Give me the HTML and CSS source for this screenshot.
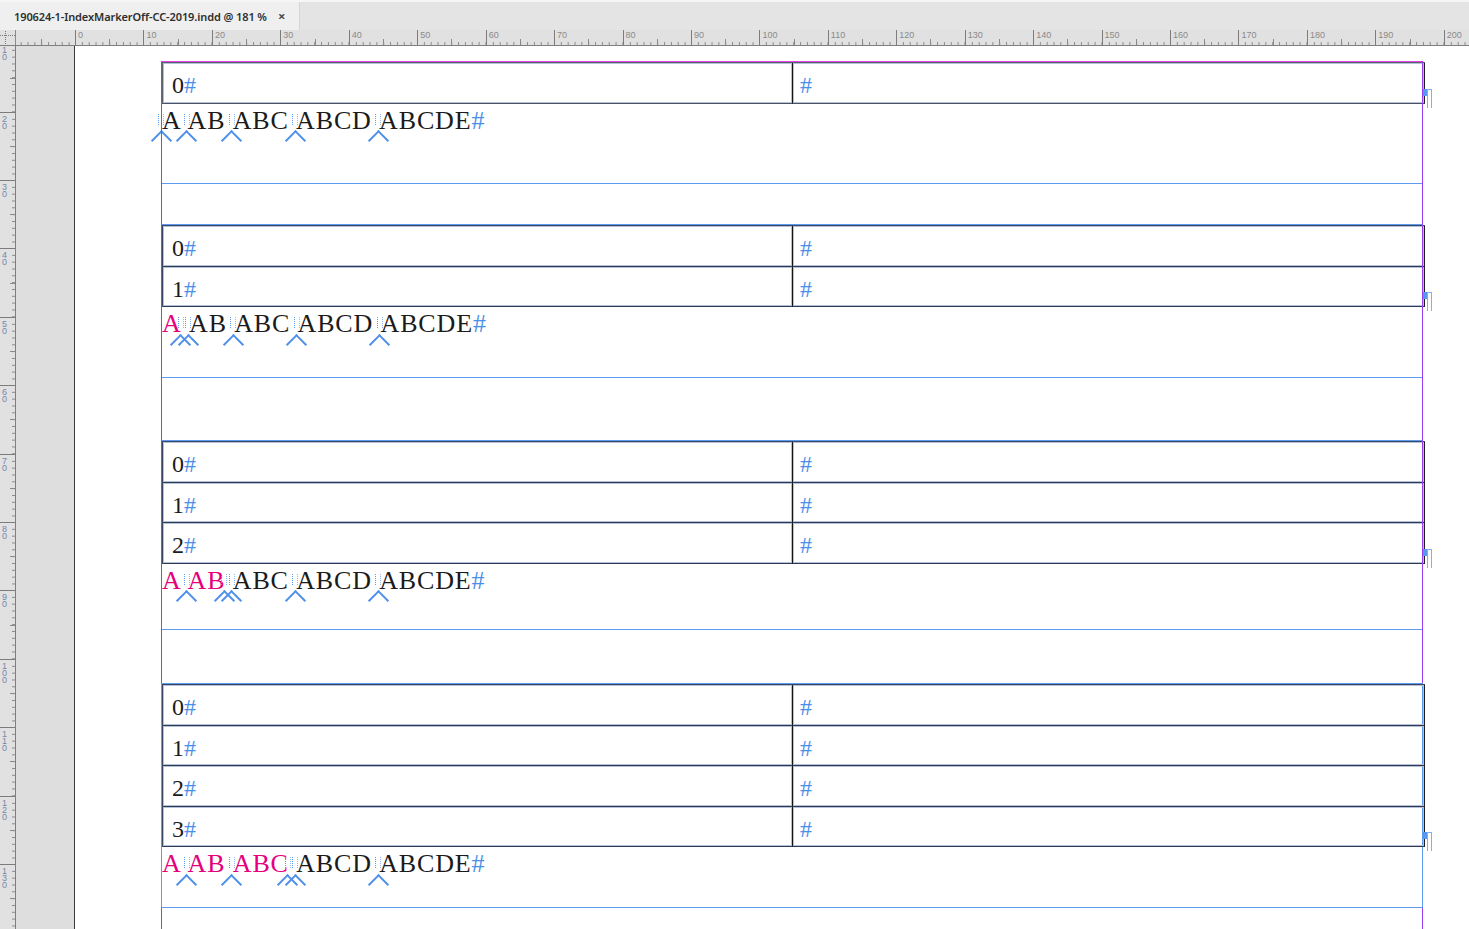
FILE: index.html
```html
<!DOCTYPE html>
<html lang="en">
<head>
<meta charset="utf-8">
<title>190624-1-IndexMarkerOff-CC-2019.indd</title>
<link rel="stylesheet" href="styles.css">
</head>
<body>
<div class="app">
  <div class="tabbar">
    <div class="tab">
      <span class="tab-title">190624-1-IndexMarkerOff-CC-2019.indd @ 181 %</span>
      <span class="tab-close">×</span>
    </div>
  </div>

  <div class="hruler-row">
    <div class="corner">
      <svg width="15" height="15" viewBox="0 0 15 15">
        <line x1="0" y1="5.5" x2="15" y2="5.5" stroke="#7a7a7a" stroke-width="1" stroke-dasharray="1 1"/>
        <line x1="5.5" y1="1" x2="5.5" y2="15" stroke="#7a7a7a" stroke-width="1" stroke-dasharray="1 1"/>
      </svg>
    </div>
    <div class="hruler">
      <div class="hstrip">
        <div class="hseg"></div>
        <div class="hseg">0</div>
        <div class="hseg">10</div>
        <div class="hseg">20</div>
        <div class="hseg">30</div>
        <div class="hseg">40</div>
        <div class="hseg">50</div>
        <div class="hseg">60</div>
        <div class="hseg">70</div>
        <div class="hseg">80</div>
        <div class="hseg">90</div>
        <div class="hseg">100</div>
        <div class="hseg">110</div>
        <div class="hseg">120</div>
        <div class="hseg">130</div>
        <div class="hseg">140</div>
        <div class="hseg">150</div>
        <div class="hseg">160</div>
        <div class="hseg">170</div>
        <div class="hseg">180</div>
        <div class="hseg">190</div>
        <div class="hseg">200</div>
      </div>
    </div>
  </div>

  <div class="workarea">
    <div class="vruler">
      <div class="vstrip">
        <div class="vseg"><span class="vlab">10</span></div>
        <div class="vseg"><span class="vlab">20</span></div>
        <div class="vseg"><span class="vlab">30</span></div>
        <div class="vseg"><span class="vlab">40</span></div>
        <div class="vseg"><span class="vlab">50</span></div>
        <div class="vseg"><span class="vlab">60</span></div>
        <div class="vseg"><span class="vlab">70</span></div>
        <div class="vseg"><span class="vlab">80</span></div>
        <div class="vseg"><span class="vlab">90</span></div>
        <div class="vseg"><span class="vlab">100</span></div>
        <div class="vseg"><span class="vlab">110</span></div>
        <div class="vseg"><span class="vlab">120</span></div>
        <div class="vseg"><span class="vlab">130</span></div>
        <div class="vseg"></div>
      </div>
    </div>
    <div class="pasteboard"></div>
    <div class="page">
      <div class="guides"></div>

      <div class="frame f1">
        <div class="tbl">
          <div class="cell c1"><span>0</span><span class="hash">#</span></div>
          <div class="cell c2"><span class="hash">#</span></div>
          <span class="tend"></span>
        </div>
        <p class="para"><span class="mk"></span>A <span class="mk"></span>AB <span class="mk"></span>ABC <span class="mk"></span>ABCD <span class="mk"></span>ABCDE<span class="hash">#</span></p>
      </div>

      <div class="frame f2">
        <div class="tbl">
          <div class="cell c1"><span>0</span><span class="hash">#</span></div>
          <div class="cell c2"><span class="hash">#</span></div>
          <div class="cell c1"><span>1</span><span class="hash">#</span></div>
          <div class="cell c2"><span class="hash">#</span></div>
          <span class="tend"></span>
        </div>
        <p class="para"><span class="pk">A</span><span class="mk"></span> <span class="mk"></span>AB <span class="mk"></span>ABC <span class="mk"></span>ABCD <span class="mk"></span>ABCDE<span class="hash">#</span></p>
      </div>

      <div class="frame f3">
        <div class="tbl">
          <div class="cell c1"><span>0</span><span class="hash">#</span></div>
          <div class="cell c2"><span class="hash">#</span></div>
          <div class="cell c1"><span>1</span><span class="hash">#</span></div>
          <div class="cell c2"><span class="hash">#</span></div>
          <div class="cell c1"><span>2</span><span class="hash">#</span></div>
          <div class="cell c2"><span class="hash">#</span></div>
          <span class="tend"></span>
        </div>
        <p class="para"><span class="pk">A</span> <span class="mk"></span><span class="pk">AB</span><span class="mk"></span> <span class="mk"></span>ABC <span class="mk"></span>ABCD <span class="mk"></span>ABCDE<span class="hash">#</span></p>
      </div>

      <div class="frame f4">
        <div class="tbl">
          <div class="cell c1"><span>0</span><span class="hash">#</span></div>
          <div class="cell c2"><span class="hash">#</span></div>
          <div class="cell c1"><span>1</span><span class="hash">#</span></div>
          <div class="cell c2"><span class="hash">#</span></div>
          <div class="cell c1"><span>2</span><span class="hash">#</span></div>
          <div class="cell c2"><span class="hash">#</span></div>
          <div class="cell c1"><span>3</span><span class="hash">#</span></div>
          <div class="cell c2"><span class="hash">#</span></div>
          <span class="tend"></span>
        </div>
        <p class="para"><span class="pk">A</span> <span class="mk"></span><span class="pk">AB</span> <span class="mk"></span><span class="pk">ABC</span><span class="mk"></span> <span class="mk"></span>ABCD <span class="mk"></span>ABCDE<span class="hash">#</span></p>
      </div>
    </div>
  </div>
</div>
</body>
</html>
```

FILE: styles.css
```css
* { box-sizing: border-box; }

html, body {
  margin: 0;
  padding: 0;
  overflow: hidden;
}

body {
  font-family: "Noto Sans", "Liberation Sans", sans-serif;
  background: #e3e3e3;
}

.app {
  display: flex;
  flex-direction: column;
  width: 1469px;
  height: 929px;
}

/* ---------- tab bar ---------- */
.tabbar {
  flex: none;
  height: 30px;
  display: flex;
  background: #e4e4e4;
  border-top: 2px solid #f5f5f5;
}

.tab {
  width: 300px;
  display: flex;
  align-items: center;
  padding-left: 14px;
  background: #efefef;
  border-right: 1px solid #d6d6d6;
}

.tab-title {
  font-size: 11px;
  font-weight: 600;
  color: #2e2e2e;
  letter-spacing: -0.1px;
  white-space: nowrap;
}

.tab-close {
  margin-left: 11px;
  font-size: 13px;
  font-weight: 700;
  color: #4a4a4a;
  line-height: 1;
}

/* ---------- horizontal ruler ---------- */
.hruler-row {
  flex: none;
  height: 16px;
  display: flex;
  background: #e1e1e1;
  border-bottom: 1px solid #7f7f7f;
}

.corner {
  flex: none;
  width: 16px;
  border-right: 1px solid #8a8a8a;
  display: flex;
  align-items: flex-start;
}

.hruler {
  flex: 1;
  overflow: hidden;
  position: relative;
}

.hstrip {
  display: flex;
  height: 100%;
  margin-left: -9.45px;
}

.hseg {
  flex: none;
  width: 68.45px;
  height: 100%;
  border-left: 1px solid #7c7c7c;
  padding: 1px 0 0 2px;
  font-family: "Liberation Sans", sans-serif;
  font-size: 9px;
  line-height: 9px;
  color: #8a8a8a;
  white-space: nowrap;
  background:
    linear-gradient(#8a8a8a, #8a8a8a) left 33.2px bottom 0 / 1px 6px no-repeat,
    linear-gradient(to right, #8a8a8a 1px, transparent 1px) left -1px bottom 0 / 6.845px 3px repeat-x;
}

/* ---------- work area ---------- */
.workarea {
  flex: 1;
  display: flex;
  min-height: 0;
  overflow: hidden;
}

.vruler {
  flex: none;
  width: 16px;
  background: #e1e1e1;
  border-right: 1px solid #7f7f7f;
  overflow: hidden;
}

.vstrip {
  margin-top: -2.7px;
}

.vseg {
  height: 68.4px;
  border-top: 1px solid #7c7c7c;
  padding: 3px 0 0 2px;
  background:
    linear-gradient(#8a8a8a, #8a8a8a) right 0 top 33.2px / 5px 1px no-repeat,
    linear-gradient(to bottom, #8a8a8a 1px, transparent 1px) right 0 top -1px / 3px 6.84px repeat-y;
}

.vlab {
  display: block;
  width: 6px;
  word-break: break-all;
  font-family: "Liberation Sans", sans-serif;
  font-size: 9px;
  line-height: 7px;
  color: #7586aa;
}

.pasteboard {
  flex: none;
  width: 58px;
  background: #dedede;
}

.page {
  flex: 1;
  position: relative;
  background: #ffffff;
  border-left: 1px solid #3b3b3b;
  padding: 15px 0 0 86px;
  overflow: hidden;
}

.guides {
  position: absolute;
  left: 86px;
  top: 15px;
  bottom: 0;
  width: 1262px;
  border-left: 1px solid #9a3ef4;
  border-right: 1px solid #9a3ef4;
  border-top: 1px solid #e83ce6;
  z-index: 1;
  pointer-events: none;
}

/* ---------- text frames ---------- */
.frame {
  position: relative;
  width: 1262px;
  border: 1px solid #5b9cf0;
}

.f1 { height: 123px; }
.f2 { height: 154px; margin-top: 40px; }
.f3 { height: 190px; margin-top: 62px; }
.f4 { height: 225px; margin-top: 53px; z-index: 2; }

/* ---------- tables ---------- */
.tbl {
  position: relative;
  display: grid;
  grid-template-columns: 630px 632px;
  grid-auto-rows: 40.5px;
  width: 1263px;
  border-top: 1px solid #3a4767;
  border-left: 1px solid #3a4767;
}

.f1 .tbl { border-color: #59606e; }
.f1 .cell { border-bottom-color: #4b5264; }

.cell {
  border-right: 1px solid #2f3a57;
  border-bottom: 1px solid #2f3a57;
  box-shadow: inset 0 0 0 1px #b3c0d6;
  padding-top: 4px;
  font-family: "Liberation Serif", serif;
  font-size: 24px;
  line-height: 36px;
  color: #1b1b1b;
  white-space: nowrap;
}

.c1 { padding-left: 9px; border-right-color: #151515; }
.c2 { padding-left: 7px; border-right-color: #1e1e1e; }

.hash { color: #4b8fe9; }

.tend {
  position: absolute;
  left: calc(100% - 2.3px);
  top: calc(100% - 15px);
  width: 9px;
  height: 19px;
  background:
    linear-gradient(#5797ef, #5797ef) 0 0 / 4px 7px no-repeat,
    linear-gradient(#7fb0f4, #7fb0f4) 4px 0 / 1px 19px no-repeat,
    linear-gradient(#7fb0f4, #7fb0f4) 4px 0 / 5px 1px no-repeat,
    linear-gradient(#7fb0f4, #7fb0f4) 8px 0 / 1px 19px no-repeat;
  z-index: 1;
}

/* ---------- paragraphs ---------- */
.para {
  margin: 0;
  padding-top: 2px;
  font-family: "Liberation Serif", serif;
  font-size: 26px;
  line-height: 30px;
  letter-spacing: 0.85px;
  color: #1b1b1b;
  white-space: nowrap;
}

.pk { color: #e4007d; }

.mk {
  display: inline-block;
  position: relative;
  width: 0;
  height: 0;
  vertical-align: baseline;
}

.mk::before {
  content: "";
  position: absolute;
  left: -4px;
  bottom: 4px;
  width: 4px;
  height: 11px;
  border-left: 1px dotted #5b9cf0;
  border-right: 1px dotted #8bbaf6;
}

.mk::after {
  content: "";
  position: absolute;
  left: -8.5px;
  top: 4.7px;
  width: 13px;
  height: 13px;
  border-top: 2.4px solid #4f90ea;
  border-left: 2.4px solid #4f90ea;
  transform: rotate(45deg);
}
```
